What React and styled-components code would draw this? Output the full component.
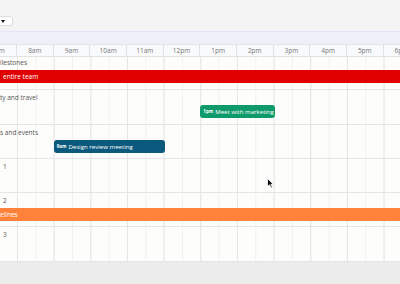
import React from 'react'
import styled, { createGlobalStyle } from 'styled-components'

const HOUR = 36.67
const START = 7
const SCROLL = -19.67

const GlobalStyle = createGlobalStyle`
    html, body {
        margin: 0;
        padding: 0;
        background: #f4f4f4;
        font-family: "Open Sans", "Liberation Sans", sans-serif;
    }
`
const Page = styled.div`
    width: 400px;
    height: 284px;
    overflow: hidden;
    position: relative;
    display: flex;
    flex-direction: column;
    background: #f4f4f4;
`
const Toolbar = styled.div`
    height: 31px;
    box-sizing: border-box;
    padding-top: 16px;
    display: flex;
`
const ViewSelect = styled.div`
    margin-left: -12px;
    width: 25px;
    height: 10px;
    box-sizing: border-box;
    background: #fff;
    border: 1px solid #dedede;
    border-radius: 3px;
    display: flex;
    align-items: center;
    justify-content: flex-end;
    padding-right: 7px;
`
const Caret = styled.span`
    width: 0;
    height: 0;
    border-left: 2.5px solid transparent;
    border-right: 2.5px solid transparent;
    border-top: 3px solid #111;
`
const Band = styled.div`
    height: 12px;
    background: #edf0f9;
    border-top: 1px solid #e3e7f3;
`
const Header = styled.div`
    height: 13px;
    box-sizing: border-box;
    display: flex;
    margin-left: ${SCROLL}px;
    background: #f9fafc;
    border-top: 1px solid #e2e5ee;
    border-bottom: 1px solid #e2e2e2;
`
const HourCell = styled.div`
    flex: 0 0 ${HOUR}px;
    box-sizing: border-box;
    border-right: 1px solid #e2e2e2;
    font-size: 6.5px;
    line-height: 11px;
    color: #777;
    text-align: center;
`
const Body = styled.div`
    flex: 1;
    display: flex;
    flex-direction: column;
    background-color: #fdfdfb;
    background-image:
        linear-gradient(to right, #e6e6e6 1px, transparent 1px),
        linear-gradient(to right, #f1f1ef 1px, transparent 1px);
    background-size: ${HOUR}px 100%, ${HOUR / 2}px 100%;
    background-position: 17px 0, 17px 0;
`
const Lane = styled.div`
    flex: ${props => props.grow};
    border-bottom: 1px solid #e6e6e6;
    display: flex;
    flex-direction: column;
`
const LaneLabel = styled.div`
    padding: ${props => props.tight ? '1px' : '3px'} 0 2px ${props => props.indent ? '3px' : '0'};
    font-size: 6.5px;
    line-height: 10px;
    color: #555;
    white-space: nowrap;
`
const Track = styled.div`
    position: relative;
    height: 13px;
`
const SpanBar = styled.div`
    height: 13px;
    display: flex;
    align-items: center;
    padding-left: ${props => props.pad || 0}px;
    background: ${props => props.color};
    color: #fff;
    font-size: 6.5px;
    white-space: nowrap;
`
const EventChip = styled.div`
    position: absolute;
    top: 0;
    height: 13px;
    box-sizing: border-box;
    display: flex;
    align-items: center;
    gap: 2px;
    padding-left: 3px;
    border-radius: 3px;
    background: ${props => props.color};
    color: #fff;
    font-size: 6.1px;
    white-space: nowrap;
    overflow: hidden;
`
const ChipTime = styled.b`
    font-size: 4.5px;
    font-weight: 700;
`
const Footer = styled.div`
    height: 22px;
    background: #ececec;
`
const Pointer = styled.svg`
    position: absolute;
    left: 267px;
    top: 178px;
`

const hours = ['7am', '8am', '9am', '10am', '11am', '12pm', '1pm', '2pm', '3pm', '4pm', '5pm', '6pm']

const lanes = [
    { label: 'ilestones', tight: true, grow: 33, bar: { text: 'entire team', color: '#e00000', pad: 3 } },
    { label: 'ty and travel', grow: 35, event: { time: '1pm', title: 'Meet with marketing', start: 13, end: 15, color: '#0f9a6b' } },
    { label: 's and events', grow: 34, event: { time: '9am', title: 'Design review meeting', start: 9, end: 12, color: '#0b5a7d' } },
    { label: '1', indent: true, grow: 35 },
    { label: '2', indent: true, grow: 34, bar: { text: 'elines', color: '#ff823a', pad: 0 } },
    { label: '3', indent: true, grow: 35 },
]

const App = () => {
    return (
        <Page>
            <GlobalStyle />
            <Toolbar>
                <ViewSelect><Caret /></ViewSelect>
            </Toolbar>
            <Band />
            <Header>
                {hours.map(h => <HourCell key={h}>{h}</HourCell>)}
            </Header>
            <Body>
                {lanes.map((lane, i) => (
                    <Lane key={i} grow={lane.grow}>
                        <LaneLabel indent={lane.indent} tight={lane.tight}>{lane.label}</LaneLabel>
                        <Track>
                            {lane.bar && (
                                <SpanBar color={lane.bar.color} pad={lane.bar.pad}>{lane.bar.text}</SpanBar>
                            )}
                            {lane.event && (
                                <EventChip
                                    color={lane.event.color}
                                    style={{
                                        left: SCROLL + (lane.event.start - START) * HOUR,
                                        width: (lane.event.end - lane.event.start) * HOUR + 1,
                                    }}
                                >
                                    <ChipTime>{lane.event.time}</ChipTime>
                                    {lane.event.title}
                                </EventChip>
                            )}
                        </Track>
                    </Lane>
                ))}
            </Body>
            <Footer />
            <Pointer width="7" height="11" viewBox="0 0 7 11">
                <path d="M0.5 0.5 L0.5 8.5 L2.5 6.8 L4 10 L5.3 9.4 L3.9 6.3 L6.3 6.3 Z" fill="#111" stroke="#fff" strokeWidth="0.8" />
            </Pointer>
        </Page>
    )
}

export default App
